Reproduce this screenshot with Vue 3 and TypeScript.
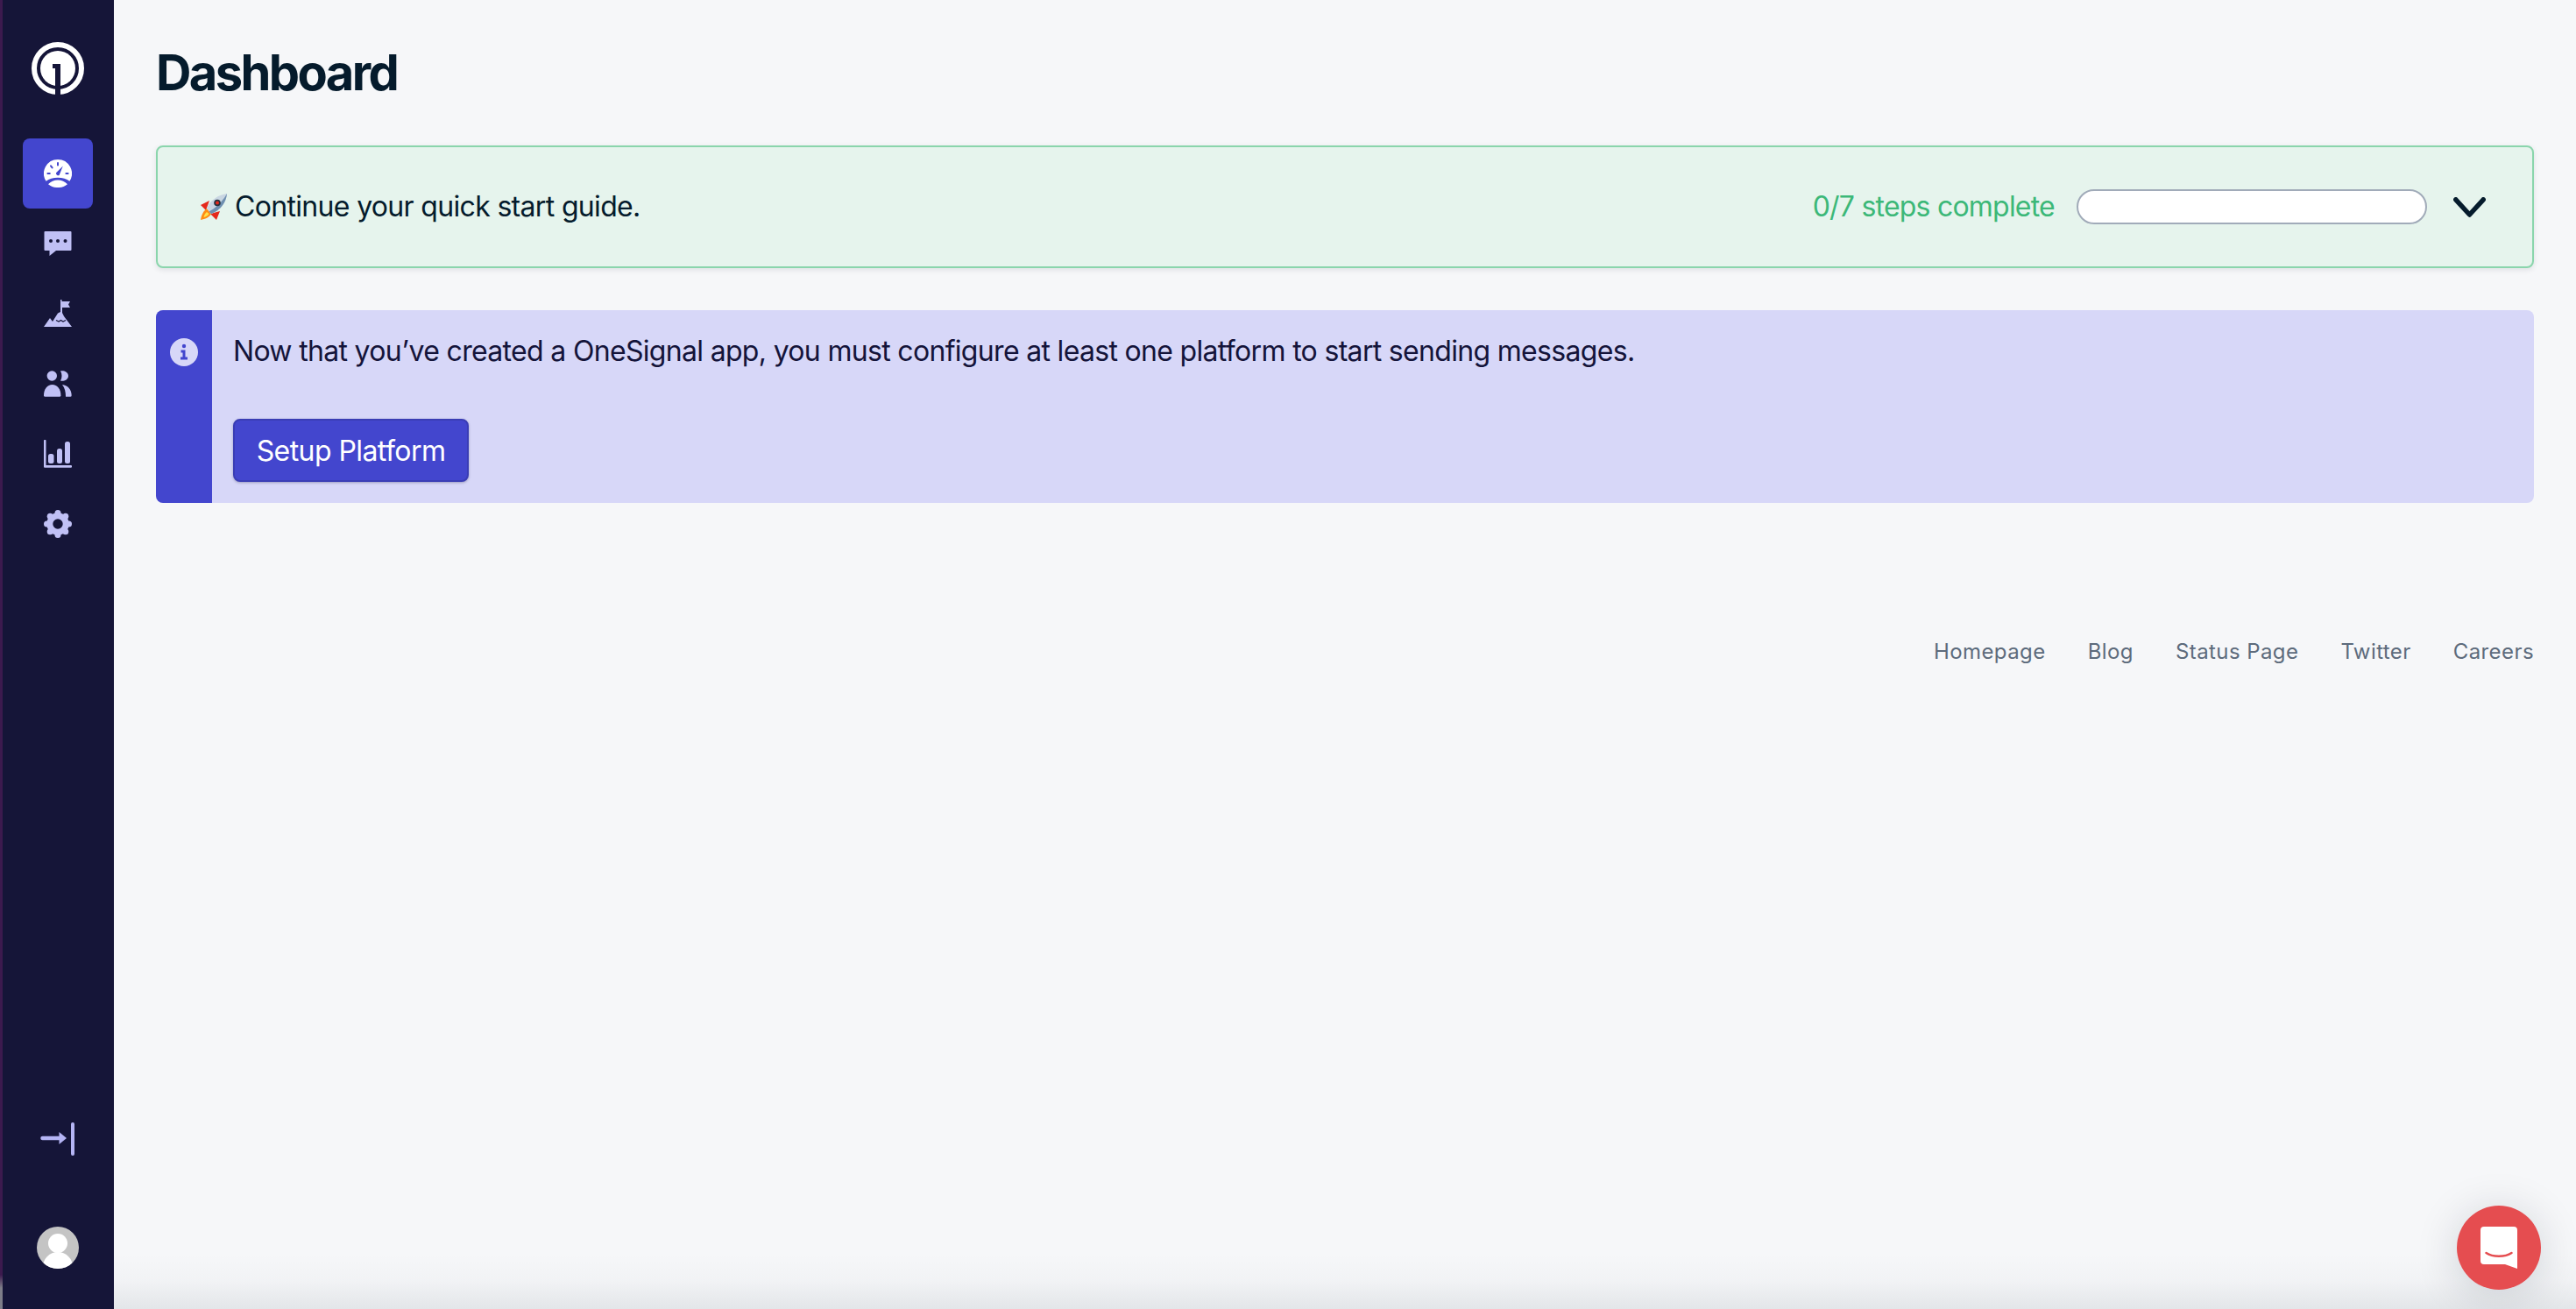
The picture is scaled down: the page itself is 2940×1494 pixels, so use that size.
<script setup lang="ts">
const footerLinks: string[] = ['Homepage', 'Blog', 'Status Page', 'Twitter', 'Careers']
</script>

<template>
  <div class="page">
    <aside class="sidebar">
      <svg class="logo" viewBox="0 0 60 60" width="60" height="60" aria-label="OneSignal">
        <circle cx="30" cy="30" r="27" fill="none" stroke="#fff" stroke-width="6" />
        <circle cx="30" cy="30" r="20" fill="#fff" />
        <path d="M27 60 V30 H24 V25 H33 V60 Z" fill="#151538" />
      </svg>

      <nav class="nav">
        <a class="nav-item active">
          <svg viewBox="0 0 32 32" width="32" height="32">
            <path d="M16 0a16 16 0 0 1 13.400 24.700C26 22 21.300 20.700 16 20.700S6 22 2.600 24.700A16 16 0 0 1 16 0Z" fill="#fff" />
            <path d="M5 28.200C8 25 11.700 23.400 16 23.400s8 1.600 11 4.800A16 16 0 0 1 16 32 16 16 0 0 1 5 28.200Z" fill="#fff" />
            <path d="M14 15.200 21.800 7.600 17.600 18a2.600 2.600 0 0 1-3.600-2.800Z" fill="#4346ce" />
            <g stroke="#4346ce" stroke-width="2" stroke-linecap="round">
              <path d="M16 4v2.600M8 7.400l1.600 2M4.400 16h2.400M25.400 16h2.200" />
            </g>
          </svg>
        </a>
        <a class="nav-item">
          <svg viewBox="0 0 32 32" width="32" height="32">
            <path d="M1.500 2h29a1 1 0 0 1 1 1v20a1 1 0 0 1-1 1H14l-7.500 6v-6h-5a1 1 0 0 1-1-1V3a1 1 0 0 1 1-1Z" fill="#c0c0f5" />
            <circle cx="8" cy="13" r="2" fill="#151538" />
            <circle cx="16" cy="13" r="2" fill="#151538" />
            <circle cx="24.500" cy="13" r="2" fill="#151538" />
          </svg>
        </a>
        <a class="nav-item">
          <svg viewBox="0 0 32 32" width="32" height="32">
            <path d="M19 0h1.500v2H30l-2 3.500L30 9H21v6l2 4L32 31H0L7 21l3 4L16 15.500l3-1.500Z" fill="#c0c0f5" />
            <path d="M14 23.500l3 1.500 2.500-1.500 2.500 1.500 3-1.500" fill="none" stroke="#151538" stroke-width="1.300" />
          </svg>
        </a>
        <a class="nav-item">
          <svg viewBox="0 0 32 32" width="32" height="32">
            <circle cx="9.300" cy="7" r="5.700" fill="#c0c0f5" />
            <path d="M19 1.500C22 .500 28 2 28 7s-6 6.500-9 5.500c2-3 2-8 0-11Z" fill="#c0c0f5" />
            <path d="M0 29.200C0 22 4 17 9.700 17s9.700 5 9.700 12.200a1.500 1.500 0 0 1-1.500 1.500H1.500A1.500 1.500 0 0 1 0 29.200Z" fill="#c0c0f5" />
            <path d="M21 17c6 .5 10.700 5.500 10.700 12.200a1.500 1.500 0 0 1-1.500 1.500H25c0-5-1-10-4-13.700Z" fill="#c0c0f5" />
          </svg>
        </a>
        <a class="nav-item">
          <svg viewBox="0 0 32 32" width="32" height="32">
            <path d="M0 1a1 1 0 0 1 2.500 0v28H31a1 1 0 0 1 1 1v.700a1 1 0 0 1-1 1H1a1 1 0 0 1-1-1Z" fill="#c0c0f5" />
            <rect x="5" y="16" width="6.500" height="11" rx="2.500" fill="#c0c0f5" />
            <rect x="15" y="10" width="6" height="17" rx="2.500" fill="#c0c0f5" />
            <rect x="24" y="2" width="6" height="25" rx="2.500" fill="#c0c0f5" />
          </svg>
        </a>
        <a class="nav-item">
          <svg viewBox="0 0 32 32" width="32" height="32">
            <g fill="#c0c0f5">
              <circle cx="16" cy="3.500" r="3.500" />
              <circle cx="16" cy="28.500" r="3.500" />
              <circle cx="3.500" cy="16" r="3.500" />
              <circle cx="28.500" cy="16" r="3.500" />
              <circle cx="7.200" cy="7.200" r="3.500" />
              <circle cx="24.800" cy="7.200" r="3.500" />
              <circle cx="7.200" cy="24.800" r="3.500" />
              <circle cx="24.800" cy="24.800" r="3.500" />
            </g>
            <circle cx="16" cy="16" r="9.200" fill="none" stroke="#c0c0f5" stroke-width="7" />
          </svg>
        </a>
      </nav>

      <div class="sidebar-bottom">
        <svg class="collapse" viewBox="0 0 40 38" width="40" height="38">
          <path d="M2.500 18h20" stroke="#b5b5f5" stroke-width="4.500" stroke-linecap="round" />
          <path d="M21.500 11 30 18l-8.500 7Z" fill="#b5b5f5" />
          <rect x="35" y="0" width="4" height="38" rx="2" fill="#b5b5f5" />
        </svg>
        <svg class="avatar" viewBox="0 0 48 48" width="48" height="48">
          <clipPath id="avatar-clip"><circle cx="24" cy="24" r="24" /></clipPath>
          <g clip-path="url(#avatar-clip)">
            <rect width="48" height="48" fill="#c4c4c4" />
            <circle cx="24" cy="19" r="11" fill="#fff" />
            <ellipse cx="24" cy="46" rx="17" ry="17" fill="#fff" />
          </g>
        </svg>
      </div>
    </aside>

    <main class="main">
      <h1 class="title">Dashboard</h1>

      <section class="guide">
        <div class="guide-text">
          <svg class="rocket" viewBox="0 0 32 32" width="32" height="32">
            <path d="M11 9 1 14l6 6Z" fill="#e5281c" />
            <path d="M23 21l-4 10-7-7Z" fill="#e5281c" />
            <path d="M8 18c-4 3-6 7-7 13 5-1 10-3 12-7Z" fill="#ff8c12" />
            <path d="M8 22c-2 1.500-3 3.500-3.500 6 2.500-.500 5-2 6-4Z" fill="#ffe14a" />
            <path d="M8 18C11 10 19 3 31 1c-1 11-8 19-18 23Z" fill="#c9d6e2" />
            <path d="M31 1c-1 11-8 19-18 23l-2.500-2.500C19 17 26 10 31 1Z" fill="#6f8fb0" />
            <circle cx="20" cy="11.500" r="3.800" fill="#26323f" />
            <circle cx="20" cy="11.500" r="2" fill="#e5281c" />
          </svg>
          <span>Continue your quick start guide.</span>
        </div>
        <div class="guide-progress">
          <span class="steps">0/7 steps complete</span>
          <div class="bar"></div>
          <svg class="chevron" viewBox="0 0 37 23" width="37" height="23">
            <path d="M2.800 2.800 18.500 20 34.200 2.800" fill="none" stroke="#051b2c" stroke-width="5.500" stroke-linecap="round" stroke-linejoin="round" />
          </svg>
        </div>
      </section>

      <section class="notice">
        <div class="notice-band">
          <svg viewBox="0 0 32 32" width="32" height="32">
            <circle cx="16" cy="16" r="16" fill="#d7d7f8" />
            <circle cx="16" cy="9" r="2.200" fill="#4346ce" />
            <path d="M12.500 13.500h5v8h2.500v3h-8v-3h2.500v-5h-2Z" fill="#4346ce" />
          </svg>
        </div>
        <div class="notice-body">
          <p class="notice-text">Now that you’ve created a OneSignal app, you must configure at least one platform to start sending messages.</p>
          <button class="btn" type="button">Setup Platform</button>
        </div>
      </section>

      <footer class="footer">
        <a v-for="link in footerLinks" :key="link" class="footer-link">{{ link }}</a>
      </footer>

      <div class="bottom-fade"></div>
    </main>

    <button class="launcher" type="button" aria-label="Open chat">
      <svg viewBox="0 0 42 48" width="42" height="48">
        <path d="M4 0h34a4 4 0 0 1 4 4v44l-14-5H4a4 4 0 0 1-4-4V4a4 4 0 0 1 4-4Z" fill="#fff" />
        <path d="M6.500 30C14 35 28 35 35.500 30" fill="none" stroke="#e54d50" stroke-width="2.500" stroke-linecap="round" />
      </svg>
    </button>
  </div>
</template>

<style scoped>
.page {
  position: relative;
  display: flex;
  width: 2940px;
  height: 1494px;
  overflow: hidden;
  font-family: Inter, "Liberation Sans", sans-serif;
  background: #f6f7f9;
}

.sidebar {
  position: relative;
  box-sizing: border-box;
  flex: none;
  width: 130px;
  height: 100%;
  display: flex;
  flex-direction: column;
  align-items: center;
  padding: 48px 1px 46px 3px;
  background: #151538;
}

.sidebar::before {
  content: "";
  position: absolute;
  left: 0;
  top: 0;
  bottom: 0;
  width: 3px;
  background: linear-gradient(to bottom, #3c1a4e 0, #3c1a4e 1455px, #7d7d88 1470px, #7d7d88 100%);
}

.logo {
  display: block;
  flex: none;
}

.nav {
  display: flex;
  flex-direction: column;
  margin-top: 50px;
}

.nav-item {
  display: flex;
  align-items: center;
  justify-content: center;
  width: 80px;
  height: 80px;
  border-radius: 8px;
}

.nav-item.active {
  background: #4346ce;
}

.sidebar-bottom {
  display: flex;
  flex-direction: column;
  align-items: center;
  gap: 81px;
  margin-top: auto;
}

.collapse,
.avatar {
  display: block;
}

.main {
  position: relative;
  flex: 1;
  min-width: 0;
  padding: 42px 48px 0;
}

.title {
  margin: 0 0 42px;
  font-size: 56px;
  line-height: 82px;
  font-weight: 700;
  letter-spacing: -2.6px;
  color: #051b2c;
}

.guide {
  box-sizing: border-box;
  height: 140px;
  display: flex;
  align-items: center;
  justify-content: space-between;
  padding: 0 53px 0 48px;
  background: #e6f4ed;
  border: 2px solid #8ad5ac;
  border-radius: 8px;
  box-shadow: 0 2px 6px rgba(5, 27, 44, 0.1);
}

.guide-text {
  display: flex;
  align-items: center;
  gap: 8px;
  font-size: 32px;
  line-height: 48px;
  letter-spacing: -0.67px;
  color: #051b2c;
}

.rocket {
  display: block;
  flex: none;
}

.guide-progress {
  display: flex;
  align-items: center;
}

.steps {
  font-size: 32px;
  line-height: 48px;
  letter-spacing: -0.78px;
  color: #3cb878;
}

.bar {
  box-sizing: border-box;
  width: 400px;
  height: 40px;
  margin-left: 25px;
  margin-right: 30px;
  background: #fff;
  border: 2px solid #a1abb9;
  border-radius: 20px;
}

.chevron {
  display: block;
  flex: none;
}

.notice {
  display: flex;
  height: 220px;
  margin-top: 48px;
  border-radius: 8px;
  overflow: hidden;
  background: #d7d7f8;
}

.notice-band {
  flex: none;
  width: 64px;
  display: flex;
  justify-content: center;
  padding-top: 32px;
  box-sizing: border-box;
  background: #4346ce;
}

.notice-band svg {
  display: block;
}

.notice-body {
  padding: 23px 24px 24px;
}

.notice-text {
  margin: 0 0 53px;
  font-size: 32px;
  line-height: 48px;
  letter-spacing: -0.68px;
  color: #14143a;
}

.btn {
  display: block;
  box-sizing: border-box;
  width: 269px;
  height: 72px;
  padding: 2px 0 0;
  font-family: inherit;
  font-size: 32px;
  line-height: 48px;
  letter-spacing: -0.57px;
  color: #fff;
  background: #4346ce;
  border: 2px solid #3a3db5;
  border-radius: 8px;
  box-shadow: 0 1px 3px rgba(20, 20, 58, 0.3);
}

.footer {
  display: flex;
  justify-content: flex-end;
  gap: 48px;
  margin-top: 152px;
}

.footer-link {
  font-size: 24px;
  line-height: 36px;
  letter-spacing: 0.42px;
  color: #5d6b7c;
}

.bottom-fade {
  position: absolute;
  left: 0;
  right: 0;
  bottom: 0;
  height: 64px;
  background: linear-gradient(to bottom, rgba(5, 27, 44, 0), rgba(5, 27, 44, 0.02) 50%, rgba(5, 27, 44, 0.08));
  pointer-events: none;
}

.launcher {
  position: absolute;
  right: 40px;
  bottom: 22px;
  display: flex;
  align-items: center;
  justify-content: center;
  width: 96px;
  height: 96px;
  padding: 0;
  border: 0;
  border-radius: 50%;
  background: #e54d50;
  box-shadow: 0 6px 50px rgba(5, 27, 44, 0.16);
}

.launcher svg {
  display: block;
}
</style>
